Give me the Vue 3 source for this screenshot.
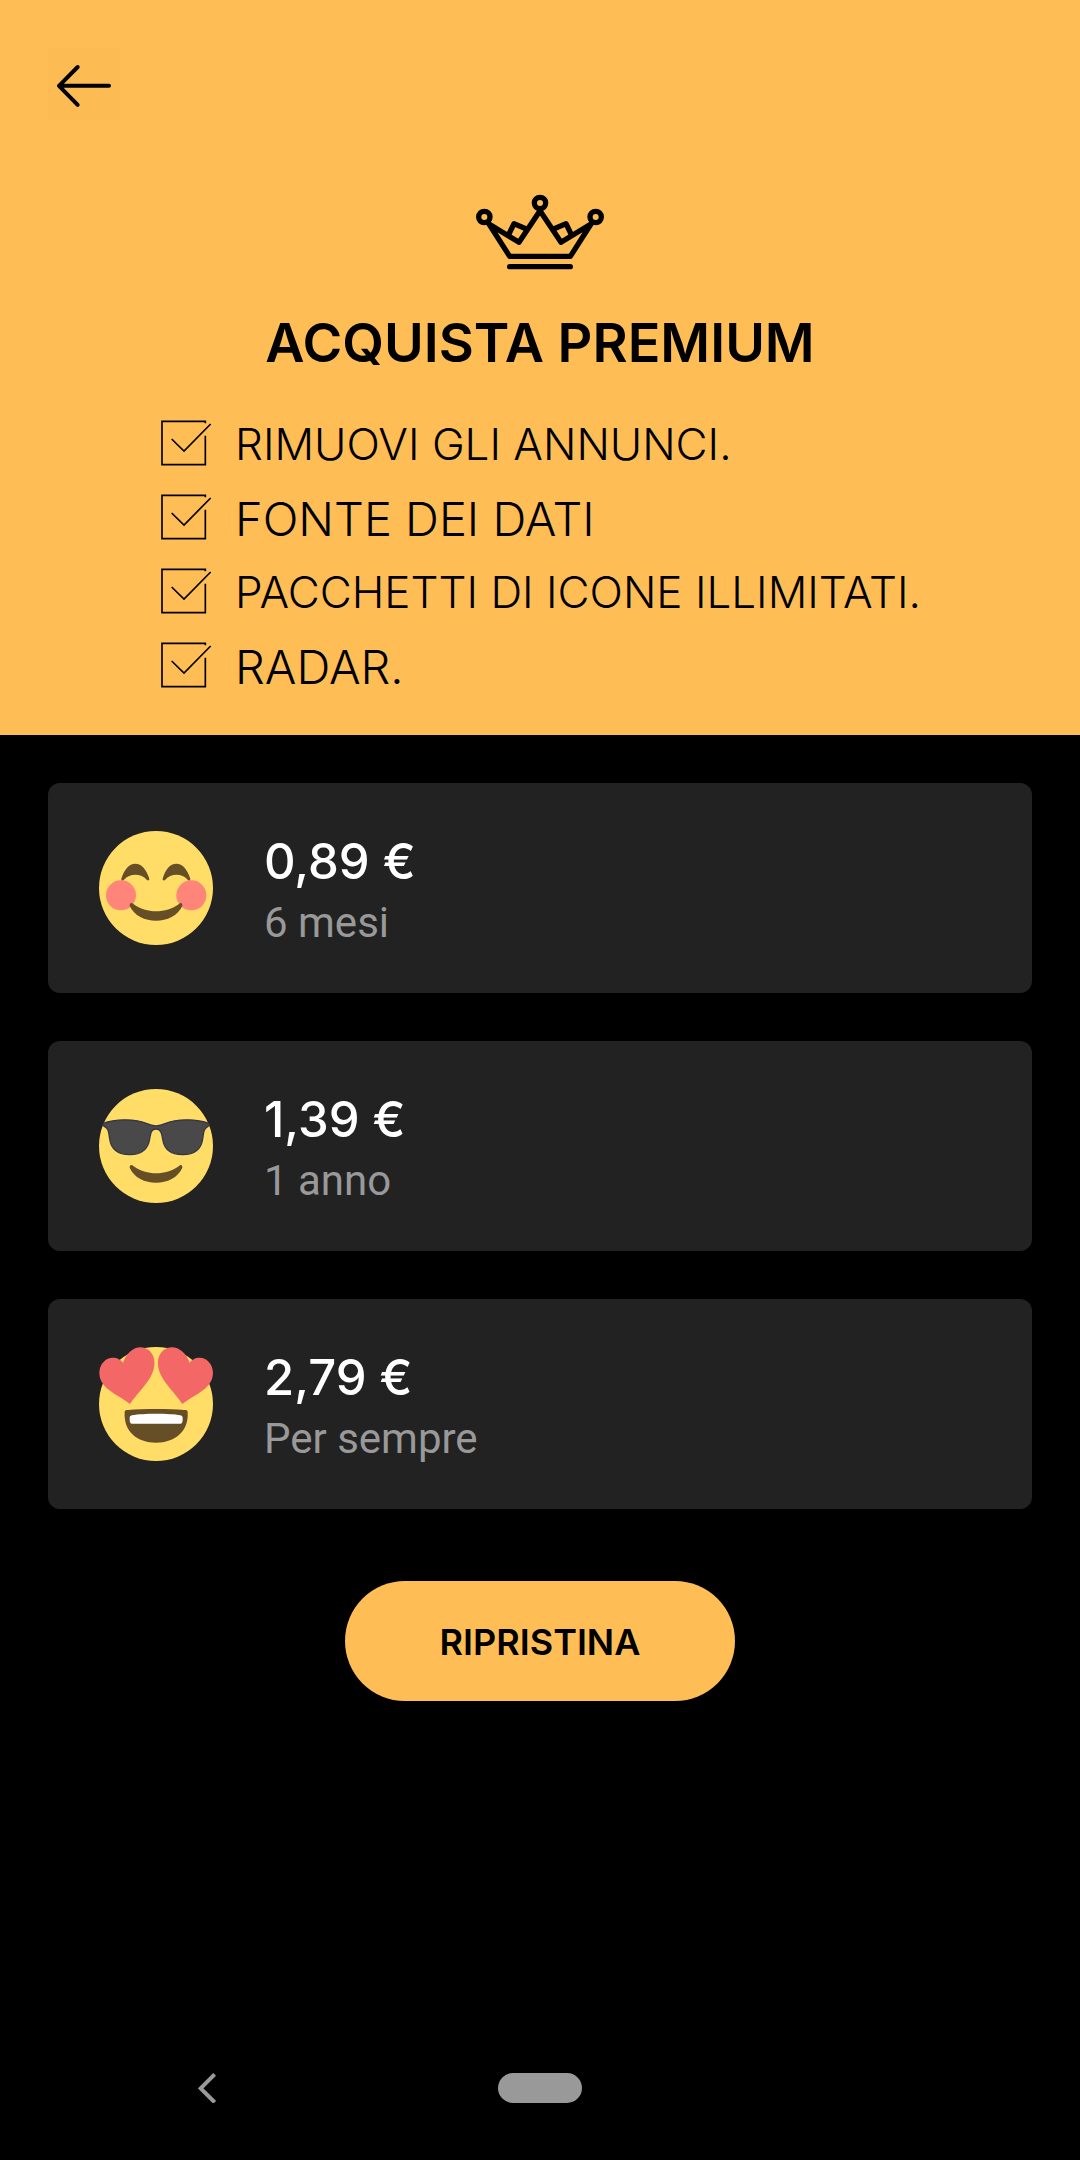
<script setup>
const features = [
  { text: 'RIMUOVI GLI ANNUNCI.', size: 'compact' },
  { text: 'FONTE DEI DATI', size: 'regular' },
  { text: 'PACCHETTI DI ICONE ILLIMITATI.', size: 'compact' },
  { text: 'RADAR.', size: 'regular' },
]

const plans = [
  { icon: 'smile', price: '0,89 €', period: '6 mesi' },
  { icon: 'cool', price: '1,39 €', period: '1 anno' },
  { icon: 'love', price: '2,79 €', period: 'Per sempre' },
]
</script>

<template>
  <div class="page">
    <header class="hero">
      <button class="back" type="button" aria-label="Indietro">
        <svg viewBox="54 24 216 216" aria-hidden="true">
          <path d="M237 137.500H87M143 81L87 137.500L143 194.500" />
        </svg>
      </button>

      <svg class="crown" viewBox="48 42 384 228" aria-hidden="true">
        <circle cx="73" cy="111" r="17" />
        <circle cx="240" cy="69" r="17" />
        <circle cx="407" cy="111" r="17" />
        <path d="M87 132L149 229H331L393 132L303 187L240 92L177 187Z" />
        <path d="M146 164L162 131L199 147M334 164L318 131L281 147" />
        <path d="M149 260H331" />
      </svg>

      <h1 class="title">ACQUISTA PREMIUM</h1>

      <ul class="features">
        <li v-for="f in features" :key="f.text" class="feature" :class="f.size">
          <svg class="check" viewBox="60 60 156 138" aria-hidden="true">
            <path d="M196 70V64H66V194H196V107" />
            <path d="M95 117L132 153L212 72" />
          </svg>
          <span class="label">{{ f.text }}</span>
        </li>
      </ul>
    </header>

    <main class="plans">
      <button v-for="p in plans" :key="p.icon" class="plan" type="button">
        <svg v-if="p.icon === 'smile'" class="emoji" viewBox="57 63 342 342" aria-hidden="true">
          <circle cx="228" cy="234" r="171" fill="#ffdd67" />
          <circle cx="123" cy="256" r="45" fill="#ff8479" />
          <circle cx="334" cy="256" r="45" fill="#ff8479" />
          <g fill="#664e27">
            <path d="M124 206C133 178 147 161 166 161S199 178 208 206C208 211 204 213 200 209C184 189 149 189 132 209C128 213 123 211 124 206Z" />
            <path d="M248 206C256 178 270 161 289 161S322 178 331 206C331 211 327 213 323 209C307 189 272 189 256 209C252 213 247 211 248 206Z" />
            <path d="M149 287C148 279 155 277 160 282C200 311 257 311 297 282C302 277 308 279 307 287C281 347 175 347 149 287Z" />
          </g>
        </svg>

        <svg v-else-if="p.icon === 'cool'" class="emoji" viewBox="57 57 342 342" aria-hidden="true">
          <circle cx="228" cy="228" r="171" fill="#ffdd67" />
          <path
            d="M70 160C101 147 166 145 201 161C220 170 236 170 255 161C290 145 355 147 386 160C389 163 388 167 384 169C370 176 371 188 368 207C363 242 337 254 308 254C275 254 252 239 248 207C245 189 242 177 228 177S212 189 209 207C204 239 181 254 149 254C119 254 94 242 89 207C86 188 87 176 73 169C69 167 68 163 70 160Z"
            fill="#494949"
            stroke="#333547"
            stroke-width="4"
          />
          <path
            d="M149 293C148 285 155 283 160 288C200 317 257 317 297 288C302 283 308 285 307 293C281 353 175 353 149 293Z"
            fill="#664e27"
          />
        </svg>

        <svg v-else class="emoji" viewBox="57 51 342 342" aria-hidden="true">
          <circle cx="228" cy="222" r="171" fill="#ffdd67" />
          <g fill="#f46767">
            <path d="M129 99C142 57 180 39 207 61C228 79 227 109 214 136C201 163 169 194 150 222C121 199 79 184 64 154C51 126 61 98 82 87C99 79 121 85 129 99Z" />
            <path d="M329 99C316 57 277 39 250 61C229 79 230 109 243 136C256 163 288 194 307 222C336 199 378 184 393 154C406 126 396 98 375 87C358 79 336 85 329 99Z" />
          </g>
          <path
            d="M134 246C134 241 138 240 145 240C190 236 267 236 312 240C319 240 323 241 323 246C327 304 285 338 228 338S130 304 134 246Z"
            fill="#664e27"
          />
          <path
            d="M156 256C190 250 267 250 301 256C307 257 308 260 308 266C308 278 306 281 299 281H158C151 281 149 278 149 266C149 260 150 257 156 256Z"
            fill="#fff"
          />
        </svg>

        <span class="details">
          <span class="price">{{ p.price }}</span>
          <span class="period">{{ p.period }}</span>
        </span>
      </button>
    </main>

    <button class="restore" type="button">RIPRISTINA</button>

    <nav class="system">
      <button class="system-back" type="button" aria-label="Indietro">
        <svg viewBox="114 98 54 90" aria-hidden="true">
          <path d="M164 102L122 144L164 186" />
        </svg>
      </button>
      <button class="system-home" type="button" aria-label="Home"></button>
    </nav>
  </div>
</template>

<style>
body {
  margin: 0;
  background: #000;
}
</style>

<style scoped>
.page {
  display: flex;
  flex-direction: column;
  min-height: 100vh;
  background: #000;
  color: #000;
  font-family: Inter, sans-serif;
}

button {
  margin: 0;
  padding: 0;
  border: 0;
  font-family: inherit;
  cursor: pointer;
}

svg {
  display: block;
  flex: none;
  fill: none;
  stroke-linecap: round;
  stroke-linejoin: round;
}

.hero {
  display: flex;
  flex-direction: column;
  padding: 48px 48px 33px;
  background: #ffbe55;
}

.back {
  width: 72px;
  height: 72px;
  background: #fdbb54;
}

.back svg {
  width: 72px;
  height: 72px;
  stroke: #000;
  stroke-width: 12;
}

.crown {
  align-self: center;
  width: 128px;
  height: 76px;
  margin-top: 74px;
  stroke: #000;
  stroke-width: 16;
}

.title {
  margin: 41px 0 31px;
  font-size: 54px;
  font-weight: 600;
  line-height: 64px;
  text-align: center;
}

.features {
  margin: 0;
  padding: 0 0 0 112px;
  list-style: none;
}

.feature {
  display: flex;
  align-items: center;
  gap: 23px;
  height: 74px;
  font-weight: 300;
  white-space: nowrap;
}

.label {
  padding-top: 2px;
}

.compact {
  font-size: 44px;
}

.regular {
  font-size: 47px;
}

.check {
  width: 52px;
  height: 46px;
  stroke: #000;
  stroke-width: 5;
  stroke-linecap: butt;
  stroke-linejoin: miter;
}

.plans {
  display: flex;
  flex-direction: column;
  gap: 48px;
  padding: 48px 48px 72px;
}

.plan {
  display: flex;
  align-items: center;
  gap: 51px;
  height: 210px;
  padding: 0 51px;
  border-radius: 12px;
  background: #222;
  text-align: left;
}

.emoji {
  width: 114px;
  height: 114px;
}

.details {
  display: flex;
  flex-direction: column;
  padding-top: 4px;
}

.price {
  color: #fff;
  font-size: 49px;
  font-weight: 500;
  line-height: 66px;
}

.period {
  color: #999;
  font-family: Roboto, sans-serif;
  font-size: 42px;
  line-height: 56px;
}

.restore {
  align-self: center;
  width: 390px;
  height: 120px;
  padding-top: 2px;
  border-radius: 60px;
  background: #ffbe55;
  color: #000;
  font-size: 36px;
  font-weight: 600;
}

.system {
  display: grid;
  grid-template-columns: 1fr auto 1fr;
  align-items: center;
  height: 144px;
  margin-top: auto;
}

.system-back {
  display: flex;
  justify-content: center;
  justify-self: center;
  width: 54px;
  margin-right: 84px;
  background: none;
}

.system-back svg {
  width: 18px;
  height: 30px;
  stroke: #999;
  stroke-width: 12;
  stroke-linecap: butt;
  stroke-linejoin: miter;
}

.system-home {
  width: 84px;
  height: 30px;
  border-radius: 15px;
  background: #999;
}
</style>
